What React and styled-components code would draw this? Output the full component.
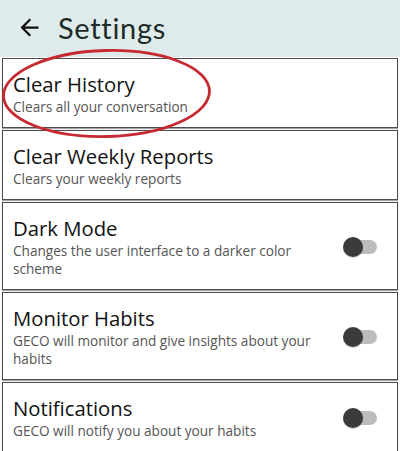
import React from "react";
import styled, { createGlobalStyle } from "styled-components";

const GlobalStyle = createGlobalStyle`
  html, body {
    margin: 0;
    padding: 0;
    background: #ffffff;
  }
  body {
    font-family: "Open Sans", "Liberation Sans", sans-serif;
  }
`;

const Page = styled.div`
  position: relative;
  width: 400px;
  min-height: 451px;
  background: #fff;
  overflow: hidden;
`;

const Header = styled.header`
  height: 57px;
  background-color: #deebea;
  display: flex;
  align-items: center;
  padding-left: 15px;
  padding-bottom: 3px;
  box-sizing: border-box;
`;

const BackButton = styled.button`
  background: none;
  border: none;
  padding: 0;
  width: 28px;
  height: 28px;
  display: flex;
  align-items: center;
  justify-content: center;
  color: #111;
  margin-right: 15px;
`;

const HeaderTitle = styled.h1`
  margin: 0;
  font-family: "Lato", "Noto Sans", sans-serif;
  font-weight: 400;
  font-size: 29px;
  letter-spacing: 0.7px;
  color: #1d2b29;
`;

const List = styled.div`
  display: flex;
  flex-direction: column;
  gap: 2px;
  padding: 1px 2px 0;
`;

const Card = styled.div`
  display: flex;
  align-items: center;
  border: 1px solid #4d4d4d;
  box-shadow: 0 1px 1px rgba(0, 0, 0, 0.35);
  padding: 12px 12px 11px 10px;
  background: #fff;
`;

const TextCol = styled.div`
  flex: 1;
  max-width: 316px;
`;

const Title = styled.div`
  font-size: 20.3px;
  line-height: 27px;
  color: #121212;
`;

const Subtitle = styled.div`
  font-size: 13.6px;
  line-height: 18px;
  color: #555;
`;

const Toggle = styled.div`
  position: relative;
  width: 34px;
  height: 20px;
  margin-left: auto;
  margin-right: 8px;
  flex-shrink: 0;

  &::before {
    content: "";
    position: absolute;
    left: 6px;
    right: 0;
    top: 3px;
    height: 14px;
    border-radius: 7px;
    background: #bdbdbd;
  }

  &::after {
    content: "";
    position: absolute;
    left: 0;
    top: 0;
    width: 20px;
    height: 20px;
    border-radius: 50%;
    background: #3b3b3b;
    box-shadow: 0 1px 1px rgba(0, 0, 0, 0.2);
  }
`;

const Annotation = styled.svg`
  position: absolute;
  left: 0;
  top: 46px;
  pointer-events: none;
`;

const items = [
  { title: "Clear History", text: "Clears all your conversation" },
  { title: "Clear Weekly Reports", text: "Clears your weekly reports" },
  {
    title: "Dark Mode",
    text: "Changes the user interface to a darker color scheme",
    toggle: true,
  },
  {
    title: "Monitor Habits",
    text: "GECO will monitor and give insights about your habits",
    toggle: true,
  },
  {
    title: "Notifications",
    text: "GECO will notify you about your habits",
    toggle: true,
  },
];

const App = () => {
  return (
    <>
      <GlobalStyle />
      <Page>
        <Header>
          <BackButton aria-label="Back">
            <svg width="27" height="27" viewBox="0 0 24 24" fill="currentColor">
              <path d="M20 11H7.83l5.59-5.59L12 4l-8 8 8 8 1.41-1.41L7.83 13H20v-2z" />
            </svg>
          </BackButton>
          <HeaderTitle>Settings</HeaderTitle>
        </Header>
        <List>
          {items.map((item) => (
            <Card key={item.title}>
              <TextCol>
                <Title>{item.title}</Title>
                <Subtitle>{item.text}</Subtitle>
              </TextCol>
              {item.toggle && <Toggle />}
            </Card>
          ))}
        </List>
        {/* red circle drawn over the first row */}
        <Annotation width="220" height="96" viewBox="0 0 220 96">
          <ellipse
            cx="106.5"
            cy="47.5"
            rx="103"
            ry="43"
            transform="rotate(-1.5 106.5 47.5)"
            fill="none"
            stroke="#c62a30"
            strokeWidth="2.8"
          />
        </Annotation>
      </Page>
    </>
  );
};

export default App;
